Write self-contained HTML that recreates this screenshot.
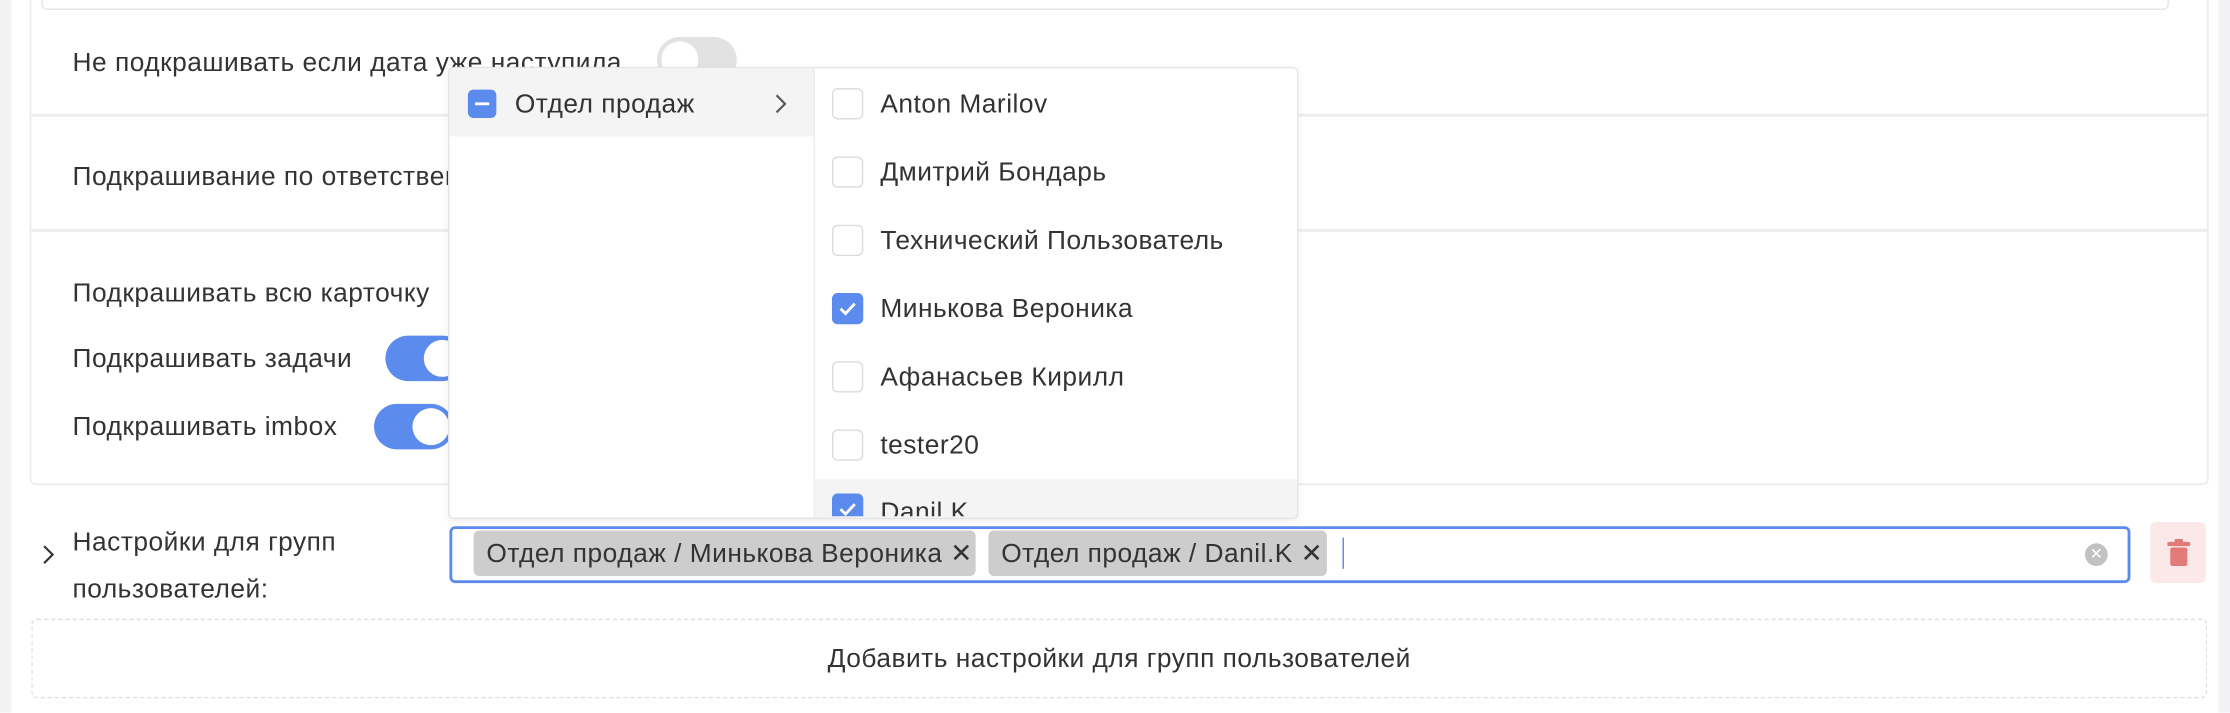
<!DOCTYPE html>
<html><head><meta charset="utf-8"><style>
html,body{margin:0;padding:0;background:#fff;overflow:hidden;width:2230px;height:712px}
#w{position:absolute;left:0;top:0;width:1568px;height:501px;transform:scale(1.42219);transform-origin:0 0;font-family:"Liberation Sans","DejaVu Sans",sans-serif;color:#333;font-size:18.5px;letter-spacing:0.35px}
.a{position:absolute}
.t{position:absolute;white-space:nowrap;line-height:20px}
.tg{position:absolute;width:56px;height:32px;border-radius:16px}
.tg i{position:absolute;top:3px;width:26px;height:26px;border-radius:50%;background:#fff}
.cb{position:absolute;width:20px;height:20px;border:1px solid #dcdcdc;border-radius:4px;background:#fff;left:585px}
.cb.on{background:#5b8bec;border-color:#5b8bec}
.tag{position:absolute;top:373px;height:32px;background:#cdcdcd;border-radius:4px;line-height:32px;padding-left:9px;color:#333;white-space:nowrap;overflow:hidden;box-sizing:border-box}
</style></head><body><div id="w">
<div class="a" style="left:0;top:0;width:8px;height:501px;background:#f2f2f4"></div>
<div class="a" style="left:1560px;top:0;width:8px;height:501px;background:#f2f2f4"></div>
<div class="a" style="left:21px;top:-10px;width:1530px;height:349px;border:1px solid #e9e9ee;border-radius:4px"></div>
<div class="a" style="left:29px;top:-10px;width:1494px;height:15px;border:1px solid #e6e6ea;border-radius:4px"></div>
<div class="a" style="left:22px;top:80px;width:1530px;height:2px;background:#ededf1"></div>
<div class="a" style="left:22px;top:161px;width:1530px;height:2px;background:#ededf1"></div>
<div class="t" style="left:51px;top:34px">Не подкрашивать если дата уже наступила</div>
<div class="tg" style="left:462px;top:26px;background:#e2e2e2"><i style="left:3px"></i></div>
<div class="t" style="left:51px;top:114px">Подкрашивание по ответственному</div>
<div class="t" style="left:51px;top:196px">Подкрашивать всю карточку</div>
<div class="t" style="left:51px;top:242px">Подкрашивать задачи</div>
<div class="tg" style="left:271px;top:236px;background:#5b8bec"><i style="left:27px"></i></div>
<div class="t" style="left:51px;top:290px">Подкрашивать imbox</div>
<div class="tg" style="left:263px;top:284px;background:#5b8bec"><i style="left:27px"></i></div>

<div class="a" style="left:315px;top:47px;width:596px;height:316px;background:#fff;border:1px solid #e4e4e8;border-radius:4px;box-shadow:0 2px 6px rgba(0,0,0,.06);overflow:hidden">
 <div class="a" style="left:0;top:0;width:256px;height:48px;background:#f4f4f4"></div>
 <div class="a" style="left:256px;top:0;width:1px;height:316px;background:#ececec"></div>
 <div class="a" style="left:257px;top:289px;width:340px;height:30px;background:#f4f4f4"></div>
</div>
<div class="a" style="left:329px;top:63px;width:20px;height:20px;background:#5b8bec;border-radius:4px"><div class="a" style="left:5px;top:9px;width:10px;height:2px;background:#fff"></div></div>
<div class="t" style="left:362px;top:63px">Отдел продаж</div>
<svg class="a" style="left:543px;top:65px" width="12" height="16"><path d="M3 2l6 6-6 6" fill="none" stroke="#555" stroke-width="1.5"/></svg>

<div class="cb" style="top:62px"></div><div class="t" style="left:619px;top:63px">Anton Marilov</div>
<div class="cb" style="top:110px"></div><div class="t" style="left:619px;top:111px">Дмитрий Бондарь</div>
<div class="cb" style="top:158px"></div><div class="t" style="left:619px;top:159px">Технический Пользователь</div>
<div class="cb on" style="top:206px"><svg class="a" style="left:3px;top:3px" width="14" height="14"><path d="M2 7l3.5 3.5L12 3.5" fill="none" stroke="#fff" stroke-width="2"/></svg></div><div class="t" style="left:619px;top:207px">Минькова Вероника</div>
<div class="cb" style="top:254px"></div><div class="t" style="left:619px;top:255px">Афанасьев Кирилл</div>
<div class="cb" style="top:302px"></div><div class="t" style="left:619px;top:303px">tester20</div>
<div class="a" style="left:573px;top:337px;width:338px;height:26px;overflow:hidden">
 <div class="cb on" style="left:12px;top:10px"><svg class="a" style="left:3px;top:3px" width="14" height="14"><path d="M2 7l3.5 3.5L12 3.5" fill="none" stroke="#fff" stroke-width="2"/></svg></div>
 <div class="t" style="left:46px;top:13px">Danil.K</div>
</div>

<svg class="a" style="left:28px;top:382px" width="12" height="16"><path d="M3 2l6 6-6 6" fill="none" stroke="#333" stroke-width="1.5"/></svg>
<div class="t" style="left:51px;top:364px;line-height:33px;white-space:normal;width:260px">Настройки для групп<br>пользователей:</div>
<div class="a" style="left:316px;top:370px;width:1178px;height:36px;border:2px solid #5b8bec;border-radius:4px"></div>
<div class="tag" style="left:333px;width:353px">Отдел продаж / Минькова Вероника ✕</div>
<div class="tag" style="left:695px;width:238px">Отдел продаж / Danil.K ✕</div>
<div class="a" style="left:944px;top:378px;width:1px;height:22px;background:#5b8bec"></div>
<div class="a" style="left:1466px;top:382px;width:16px;height:16px;border-radius:50%;background:#c2c2c2;color:#fff;font-size:11px;letter-spacing:0;line-height:16px;text-align:center;font-weight:bold">✕</div>
<div class="a" style="left:1512px;top:367px;width:39px;height:43px;background:#fbe8e8;border-radius:4px">
<svg class="a" style="left:11px;top:12px" width="18" height="20"><rect x="1" y="2" width="16" height="3" rx="1" fill="#e27a7a"/><rect x="6" y="0" width="6" height="3" rx="1" fill="#e27a7a"/><rect x="3" y="6" width="12" height="13" rx="1.5" fill="#e27a7a"/></svg></div>

<div class="a" style="left:22px;top:435px;width:1528px;height:54px;border:1px dashed #dedede;border-radius:4px;text-align:center;line-height:54px">Добавить настройки для групп пользователей</div>
</div></body></html>
